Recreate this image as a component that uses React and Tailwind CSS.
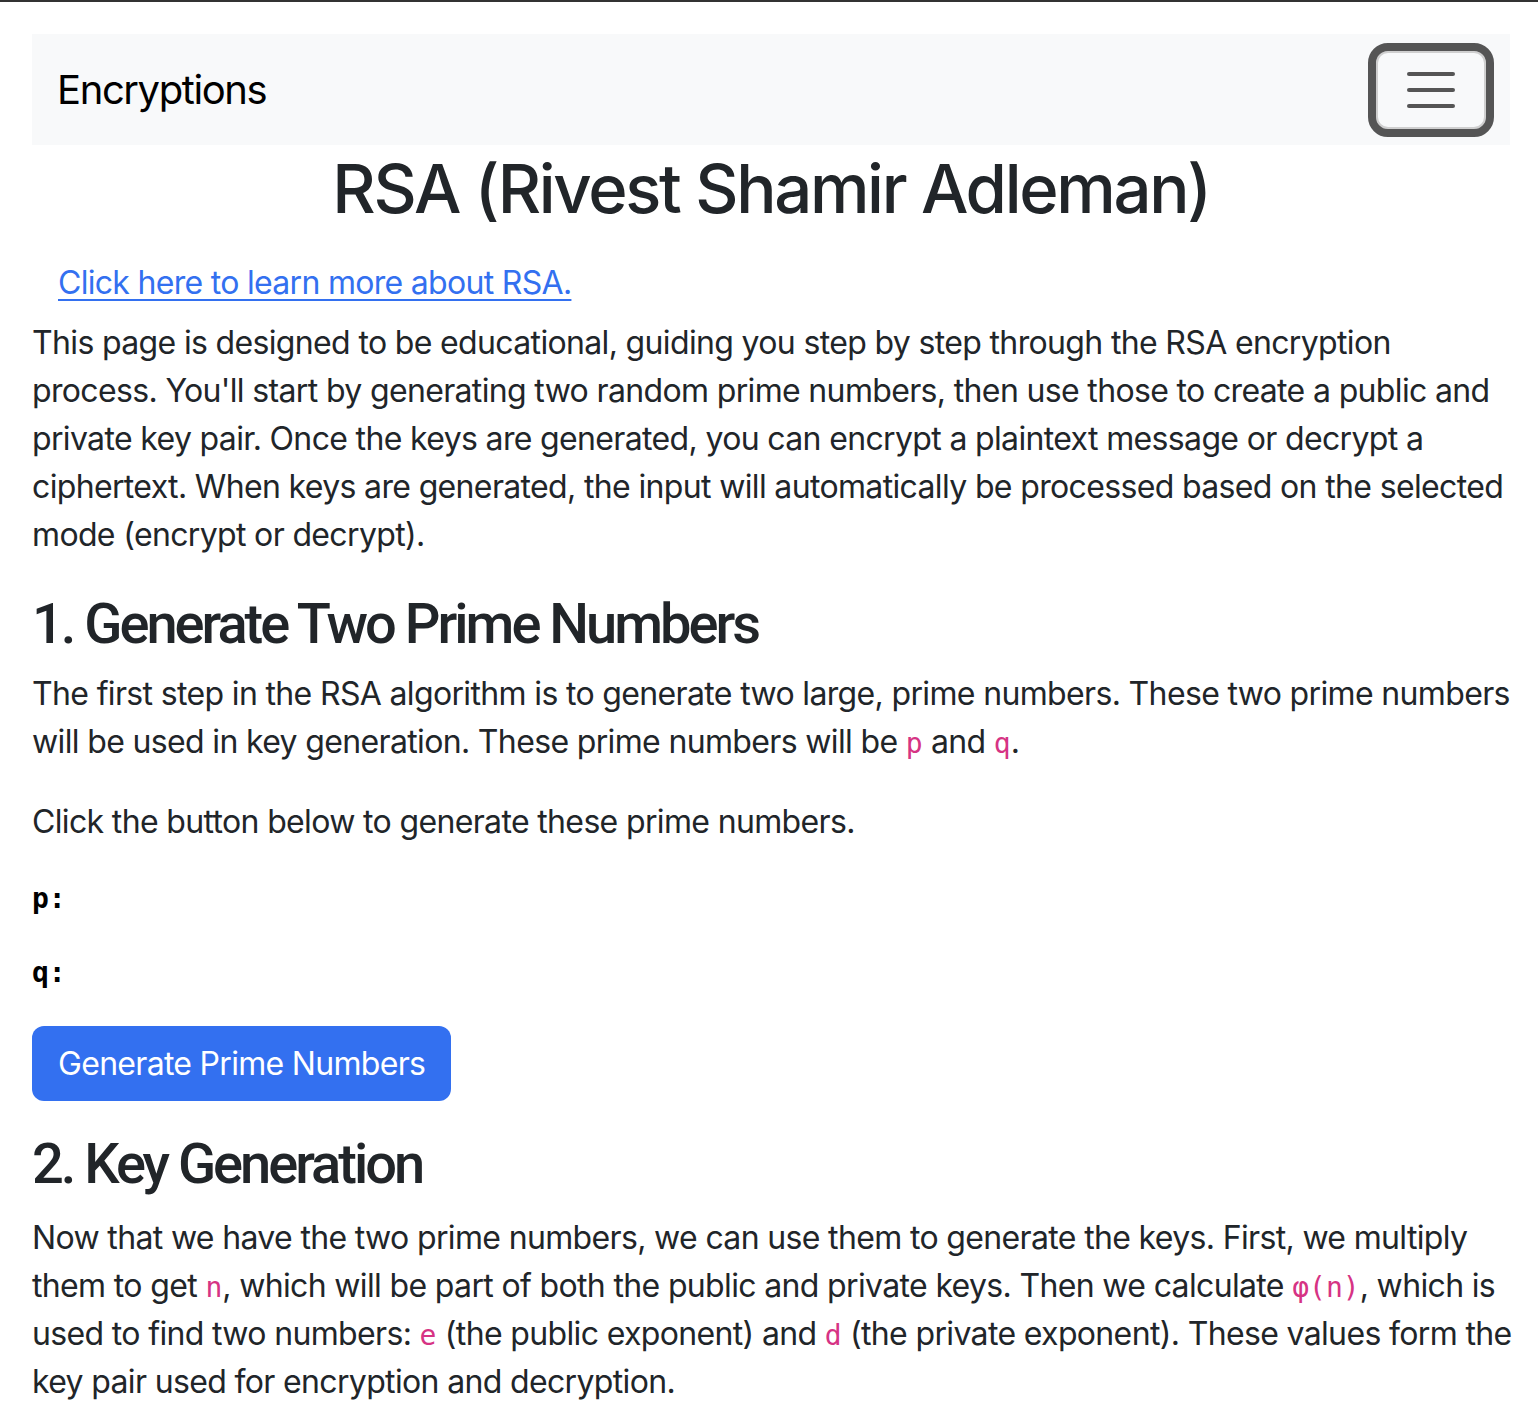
import React from "react";

const mono = { fontFamily: '"DejaVu Sans Mono", monospace' };

const Code = ({ children }) => (
  <code className="text-[28px] leading-none text-[#d63384] tracking-normal" style={mono}>
    {children}
  </code>
);

const P = ({ children, className = "" }) => (
  <p className={"text-[32px] leading-[48px] tracking-[-0.65px] whitespace-nowrap mb-[32px] " + className}>
    {children}
  </p>
);

export default function App() {
  return (
    <div
      className="min-h-[1414px] bg-white border-t-2 border-[#333] text-[#212529]"
      style={{ fontFamily: 'Inter, "Noto Sans", sans-serif' }}
    >
      <div className="pl-[32px] pr-[28px] pt-[32px]">
        <nav className="h-[111px] bg-[#f8f9fa] flex items-center justify-between pl-[25px] pr-[16px]">
          <span className="text-[40px] leading-[60px] text-black tracking-[-1.4px]">Encryptions</span>
          <button className="w-[126px] h-[94px] rounded-[20px] border-[8px] border-[#555] flex items-center justify-center shadow-[inset_0_0_0_2px_#cfcfcf]">
            <span className="flex flex-col gap-[12px]">
              <span className="block w-[48px] h-[4px] rounded-full bg-[#555]" />
              <span className="block w-[48px] h-[4px] rounded-full bg-[#555]" />
              <span className="block w-[48px] h-[4px] rounded-full bg-[#555]" />
            </span>
          </button>
        </nav>

        <h1 className="text-center text-[67px] leading-[80px] font-medium tracking-[-2.3px] mt-[4px] mb-[16px]">
          RSA (Rivest Shamir Adleman)
        </h1>

        <div className="pl-[26px] h-[48px] leading-[48px] mt-[30px] mb-[12px]">
          <a href="#" className="text-[32px] tracking-[-0.7px] text-[#3370f0] underline underline-offset-[5px] decoration-[2px]">
            Click here to learn more about RSA.
          </a>
        </div>

        <P>
          This page is designed to be educational, guiding you step by step through the RSA encryption
          <br />
          process. You'll start by generating two random prime numbers, then use those to create a public and
          <br />
          private key pair. Once the keys are generated, you can encrypt a plaintext message or decrypt a
          <br />
          ciphertext. When keys are generated, the input will automatically be processed based on the selected
          <br />
          mode (encrypt or decrypt).
        </P>

        <h2
          className="text-[56px] leading-[67px] font-medium tracking-[-3px] mb-[12px]"
          style={{ fontFamily: 'Roboto, Inter, sans-serif' }}
        >
          1. Generate Two Prime Numbers
        </h2>
        <P>
          The first step in the RSA algorithm is to generate two large, prime numbers. These two prime numbers
          <br />
          will be used in key generation. These prime numbers will be <Code>p</Code> and <Code>q</Code>.
        </P>
        <P>Click the button below to generate these prime numbers.</P>
        <pre className="text-[28px] leading-[42px] font-bold mb-[32px] text-black" style={mono}>
          p:
        </pre>
        <pre className="text-[28px] leading-[42px] font-bold mb-[32px] text-black" style={mono}>
          q:
        </pre>
        <button className="h-[75px] px-[26px] rounded-[12px] bg-[#3370f0] text-white text-[32px] leading-[48px] tracking-[-0.7px]">
          Generate Prime Numbers
        </button>

        <h2
          className="text-[56px] leading-[67px] font-medium tracking-[-3px] mt-[30px] mb-[16px]"
          style={{ fontFamily: 'Roboto, Inter, sans-serif' }}
        >
          2. Key Generation
        </h2>
        <P>
          Now that we have the two prime numbers, we can use them to generate the keys. First, we multiply
          <br />
          them to get <Code>n</Code>, which will be part of both the public and private keys. Then we calculate <Code>φ(n)</Code>, which is
          <br />
          used to find two numbers: <Code>e</Code> (the public exponent) and <Code>d</Code> (the private exponent). These values form the
          <br />
          key pair used for encryption and decryption.
        </P>
      </div>
    </div>
  );
}
